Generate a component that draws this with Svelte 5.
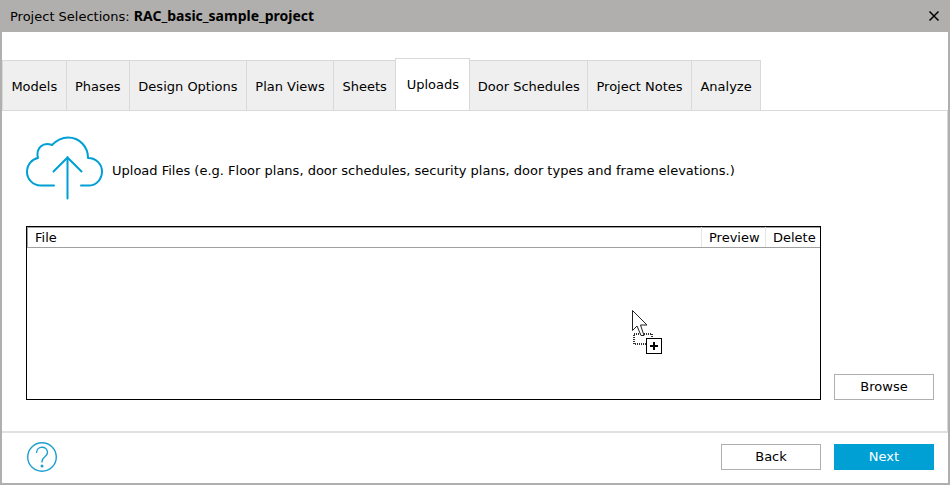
<script lang="ts">
	const {
		projectName = 'RAC_basic_sample_project'
	}: {
		projectName?: string;
	} = $props();

	const tabs = [
		'Models',
		'Phases',
		'Design Options',
		'Plan Views',
		'Sheets',
		'Uploads',
		'Door Schedules',
		'Project Notes',
		'Analyze'
	];

	let activeTab = $state('Uploads');
	let files = $state<string[]>([]);
	let fileInput: HTMLInputElement | null = null;

	const addFiles = (list: FileList | null | undefined) => {
		if (list) {
			files = [...files, ...Array.from(list).map((file) => file.name)];
		}
	};

	const removeFile = (index: number) => {
		files = files.filter((_, i) => i !== index);
	};

	const step = (by: number) => {
		const next = tabs.indexOf(activeTab) + by;
		if (next >= 0 && next < tabs.length) {
			activeTab = tabs[next];
		}
	};
</script>

<div class="window">
	<header class="title-bar">
		<h1>Project Selections: <strong>{projectName}</strong></h1>
		<button class="close" aria-label="Close">
			<svg width="12" height="12" viewBox="0 0 12 12">
				<path d="M1.5 1.5 10.5 10.5M10.5 1.5 1.5 10.5" />
			</svg>
		</button>
	</header>

	<div class="tabs" role="tablist">
		{#each tabs as tab}
			<button
				role="tab"
				class="tab"
				class:active={activeTab === tab}
				aria-selected={activeTab === tab}
				onclick={() => (activeTab = tab)}>{tab}</button
			>
		{/each}
	</div>

	<main class="panel">
		{#if activeTab === 'Uploads'}
			<div class="intro">
				<svg class="cloud" width="78" height="64" viewBox="0 0 78 64">
					<path
						d="M28 49.5H14.5C7 49.5 1 43 1 36C1 28.5 6 23 12 22C9.5 12 17 5.500 26 9C31 4 36 1.500 42 1.500C53.500 1.500 62 10.500 62 22C70.500 22 76 28.500 76 35.500C76 43 70.500 49.500 62.500 49.500H55"
					/>
					<path d="M41.500 62.500V21M27.500 35.500 41.500 21.500 55.500 35.500" />
				</svg>
				<p>
					Upload Files (e.g. Floor plans, door schedules, security plans, door types and frame
					elevations.)
				</p>
			</div>
			<div class="upload">
				<div
					class="drop-zone"
					role="region"
					aria-label="Files"
					ondragover={(e) => e.preventDefault()}
					ondrop={(e) => {
						e.preventDefault();
						addFiles(e.dataTransfer?.files);
					}}
				>
					<table>
						<thead>
							<tr>
								<th>File</th>
								<th class="preview">Preview</th>
								<th class="delete">Delete</th>
							</tr>
						</thead>
						<tbody>
							{#each files as file, i}
								<tr>
									<td>{file}</td>
									<td><button class="link">View</button></td>
									<td><button class="link" onclick={() => removeFile(i)}>Delete</button></td>
								</tr>
							{/each}
						</tbody>
					</table>
					<svg class="drag-cursor" width="32" height="46" viewBox="0 0 32 46">
						<path class="ghost" d="M3 25H21V35H3Z" />
						<path
							class="arrow"
							d="M1.500 1.500V21.500L6 17L10 26.500H13L9.500 16H16Z"
						/>
						<rect class="badge" x="15.500" y="29.500" width="15" height="15" />
						<path class="plus" d="M19 37H27M23 33V41" />
					</svg>
				</div>
				<button class="button" onclick={() => fileInput?.click()}>Browse</button>
				<input
					bind:this={fileInput}
					type="file"
					multiple
					hidden
					aria-label="Choose files"
					onchange={(e) => addFiles(e.currentTarget.files)}
				/>
			</div>
		{/if}
	</main>

	<footer>
		<button class="help" aria-label="Help">
			<svg width="32" height="32" viewBox="0 0 32 32">
				<circle cx="16" cy="16" r="14.300" />
				<path d="M10.500 12C10.500 4.500 21.500 4.500 21.500 11.500C21.500 16 16 15.500 16 20.500V21.500" />
				<circle class="dot" cx="16" cy="25" r="1.500" />
			</svg>
		</button>
		<div class="actions">
			<button class="button" onclick={() => step(-1)}>Back</button>
			<button class="button primary" onclick={() => step(1)}>Next</button>
		</div>
	</footer>
</div>

<style>
	:global(body) {
		margin: 0;
	}
	.window {
		box-sizing: border-box;
		min-height: 100vh;
		display: flex;
		flex-direction: column;
		border: 2px solid #b1afad;
		border-top: none;
		background-color: white;
		color: black;
		font-family: Verdana, 'DejaVu Sans', sans-serif;
		font-size: 13px;
		line-height: 18px;
	}
	button {
		font: inherit;
		color: inherit;
		cursor: pointer;
	}
	svg {
		display: block;
		fill: none;
	}
	.title-bar {
		display: flex;
		align-items: center;
		justify-content: space-between;
		height: 32px;
		padding: 0 8px;
		background-color: #b1afad;
	}
	h1 {
		margin: 0;
		font-size: 13px;
		font-weight: normal;
	}
	strong {
		font-family: 'Noto Sans', sans-serif;
		font-size: 14px;
	}
	.close {
		padding: 0;
		border: none;
		background: none;
	}
	.close svg {
		stroke: black;
		stroke-width: 1.5;
	}
	.tabs {
		display: flex;
		align-items: flex-end;
		max-width: 759px;
		margin-top: 26px;
	}
	.tab {
		flex: 1 1 auto;
		height: 51px;
		margin-bottom: -1px;
		padding: 2px 7px 0;
		border: 1px solid #d9d9d9;
		border-right: none;
		background-color: #efefef;
		white-space: nowrap;
	}
	.tab:last-child {
		border-right: 1px solid #d9d9d9;
	}
	.tab.active {
		height: 53px;
		padding: 0 9px;
		border-right: 1px solid #d9d9d9;
		border-bottom-color: white;
		background-color: white;
	}
	.tab.active + .tab {
		padding: 2px 6px 0;
		border-left: none;
	}
	.panel {
		flex: 1;
		display: flex;
		flex-direction: column;
		gap: 26px;
		padding: 25px 13px 31px 24px;
		border-top: 1px solid #d9d9d9;
		border-right: 1px solid #d9d9d9;
	}
	.intro {
		display: flex;
		align-items: center;
		gap: 8px;
	}
	.intro p {
		margin: 0;
		padding-top: 6px;
	}
	.cloud {
		flex: none;
		stroke: #009fd4;
		stroke-width: 2;
		stroke-linecap: round;
		stroke-linejoin: round;
	}
	.upload {
		flex: 1;
		display: flex;
		align-items: flex-end;
		gap: 13px;
	}
	.drop-zone {
		flex: 1;
		align-self: stretch;
		position: relative;
		border: 1px solid black;
	}
	table {
		width: 100%;
		border-collapse: collapse;
		table-layout: fixed;
	}
	th,
	td {
		padding: 1px 7px;
		text-align: left;
		font-weight: normal;
	}
	th {
		padding-bottom: 0;
		border-bottom: 1px solid #a0a0a0;
	}
	thead {
		border-top: 1px solid #a0a0a0;
		border-left: 1px solid #a0a0a0;
	}
	.preview {
		width: 49px;
		border-left: 1px solid #e5e5e5;
	}
	.delete {
		width: 40px;
		border-left: 1px solid #e5e5e5;
	}
	.link {
		padding: 0;
		border: none;
		background: none;
		color: #009fd4;
	}
	.drag-cursor {
		position: absolute;
		left: 604px;
		top: 82px;
		pointer-events: none;
	}
	.ghost {
		stroke: #333;
		stroke-width: 2;
		stroke-dasharray: 1 1;
	}
	.arrow {
		fill: white;
		stroke: #222;
	}
	.badge {
		fill: white;
		stroke: black;
	}
	.plus {
		stroke: black;
		stroke-width: 2;
	}
	.button {
		box-sizing: border-box;
		width: 100px;
		height: 26px;
		padding: 0;
		border: 1px solid #b1afad;
		background-color: white;
	}
	.primary {
		border-color: #00a0d5;
		background-color: #00a0d5;
		color: white;
	}
	footer {
		display: flex;
		align-items: center;
		justify-content: space-between;
		height: 48px;
		padding: 0 14px 2px 24px;
		border-top: 2px solid #e0e0e0;
	}
	.help {
		padding: 0;
		border: none;
		background: none;
	}
	.help svg {
		stroke: #1b9fd0;
		stroke-width: 1.4;
	}
	.help .dot {
		fill: #1b9fd0;
		stroke: none;
	}
	.actions {
		display: flex;
		gap: 13px;
	}
</style>
